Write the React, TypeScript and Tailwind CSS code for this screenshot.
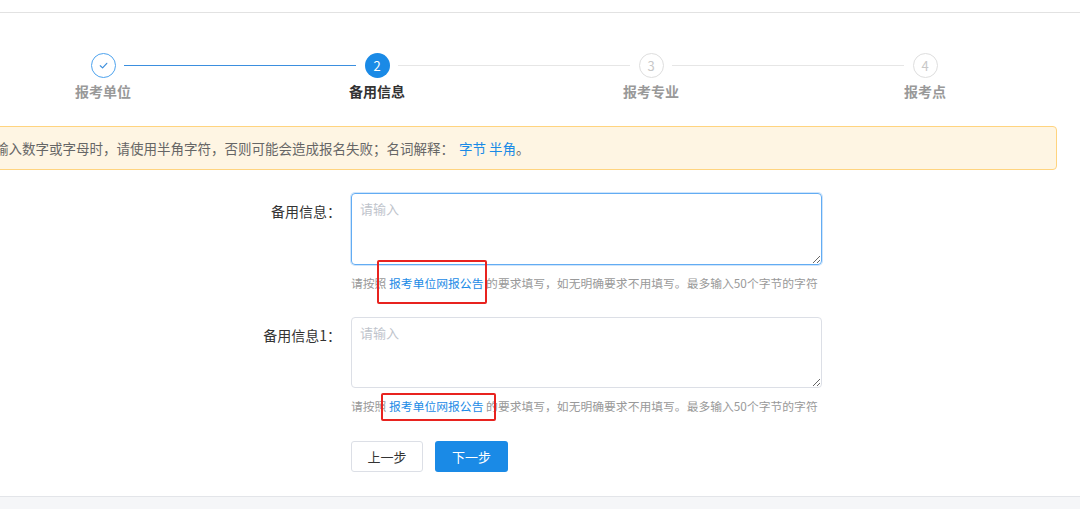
import React from 'react';

const steps = [
  { label: '报考单位', state: 'done' },
  { label: '备用信息', state: 'active' },
  { label: '报考专业', state: 'todo' },
  { label: '报考点', state: 'todo' },
] as const;

const StepCircle: React.FC<{ state: string; index: number }> = ({ state, index }) => {
  if (state === 'done') {
    return (
      <div className="w-[25px] h-[25px] shrink-0 rounded-full border border-[#4ea3ee] flex items-center justify-center">
        <svg width="11" height="11" viewBox="0 0 12 12" fill="none">
          <polyline points="2.5,6.3 5,8.6 9.6,3.6" stroke="#3d8fdc" strokeWidth="1.3" strokeLinecap="round" strokeLinejoin="round" />
        </svg>
      </div>
    );
  }
  if (state === 'active') {
    return (
      <div className="w-[25px] h-[25px] shrink-0 rounded-full bg-[#1a8ae6] flex items-center justify-center text-white text-[13px]">
        {index + 1}
      </div>
    );
  }
  return (
    <div className="w-[25px] h-[25px] shrink-0 rounded-full border border-[#dedede] flex items-center justify-center text-[#c8c8c8] text-[13px]">
      {index + 1}
    </div>
  );
};

const Hint: React.FC = () => (
  <p className="mt-[10px] ml-[351px] text-[11.8px] leading-[16px] text-[#999] whitespace-nowrap">
    请按照 <span className="text-[#1a8ae6]">报考单位网报公告</span> 的要求填写，如无明确要求不用填写。最多输入50个字节的字符
  </p>
);

const App: React.FC = () => {
  return (
    <div
      className="relative w-[1080px] h-[509px] overflow-hidden bg-white flex flex-col"
      style={{ fontFamily: '"Noto Sans CJK SC", "Noto Sans", sans-serif' }}
    >
      {/* header edge */}
      <div className="h-[13px] shrink-0 border-b border-[#e2e2e2]" />

      {/* steps */}
      <div className="flex -ml-[34px] pt-10 shrink-0">
        {steps.map((s, i) => (
          <div key={s.label} className="w-[274px] shrink-0 flex flex-col items-center">
            <div className="w-full flex items-center">
              <div className="flex-1 h-[25px] flex items-center">
                {i > 0 && (
                  <div className={`w-full mr-[9px] h-px ${i === 1 ? 'bg-[#3b8fdf]' : 'bg-[#e6e6e6]'}`} />
                )}
              </div>
              <StepCircle state={s.state} index={i} />
              <div className="flex-1 h-[25px] flex items-center">
                {i < steps.length - 1 && (
                  <div className={`w-full ml-[8px] h-px ${i === 0 ? 'bg-[#3b8fdf]' : 'bg-[#e6e6e6]'}`} />
                )}
              </div>
            </div>
            <div
              className={`mt-[3px] text-[14px] leading-[20px] font-bold ${
                s.state === 'active' ? 'text-[#333]' : 'text-[#999]'
              }`}
            >
              {s.label}
            </div>
          </div>
        ))}
      </div>

      {/* notice */}
      <div className="mt-[25px] -ml-[30px] mr-[23px] h-[44px] shrink-0 flex items-center pl-[24px] bg-[#fef5e3] border border-[#ffd47f] rounded-[4px] text-[13.5px] text-[#666] whitespace-nowrap">
        输入数字或字母时，请使用半角字符，否则可能会造成报名失败；名词解释：
        <span className="ml-[5px] text-[#1a8ae6]">字节 半角</span>。
      </div>

      {/* form */}
      <div className="mt-[23px] flex shrink-0">
        <label className="w-[341px] text-right pt-[8px] text-[14px] leading-[20px] text-[#333]">备用信息：</label>
        <textarea
          placeholder="请输入"
          className="ml-[10px] w-[471px] h-[72px] px-[8px] py-[5px] text-[13px] leading-[20px] rounded-[4px] border border-[#62acf3] shadow-[0_0_0_1px_#cfe5fb] outline-none placeholder:text-[#c0c4cc]"
        />
      </div>
      <Hint />

      <div className="mt-[26px] flex shrink-0">
        <label className="w-[341px] text-right pt-[8px] text-[14px] leading-[20px] text-[#333]">备用信息1：</label>
        <textarea
          placeholder="请输入"
          className="ml-[10px] w-[471px] h-[71px] px-[8px] py-[5px] text-[13px] leading-[20px] rounded-[4px] border border-[#dcdfe6] outline-none placeholder:text-[#c0c4cc]"
        />
      </div>
      <Hint />

      <div className="mt-[27px] ml-[351px] flex gap-[12px] shrink-0">
        <button className="w-[72px] h-[31px] rounded-[3px] border border-[#dcdfe6] bg-white text-[13px] text-[#333]">上一步</button>
        <button className="w-[73px] h-[31px] rounded-[3px] bg-[#1a8ae6] text-[13px] text-white">下一步</button>
      </div>

      <div className="mt-[24px] flex-1 bg-[#f5f6f8] border-t border-[#e3e5e9]" />

      {/* red annotation boxes */}
      <div className="absolute left-[377px] top-[260px] w-[110px] h-[44px] border-2 border-[#e8231f] rounded-[2px]" />
      <div className="absolute left-[381px] top-[393px] w-[115px] h-[28px] border-2 border-[#e8231f] rounded-[2px]" />
    </div>
  );
};

export default App;
